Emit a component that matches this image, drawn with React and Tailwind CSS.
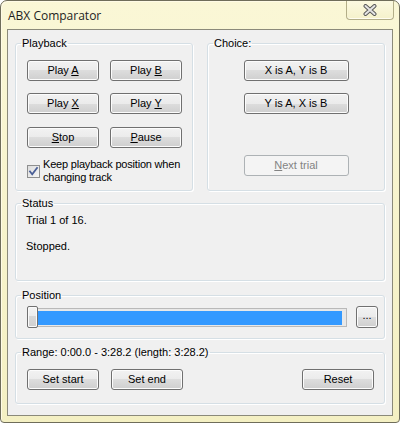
import React from "react";
import clsx from "clsx";

const Btn = ({ children, className, disabled }) => (
  <button
    disabled={disabled}
    className={clsx(
      "h-[21px] rounded-[3px] border text-[11px] leading-[13px] flex items-center justify-center",
      disabled
        ? "border-[#adb2b5] bg-[#f4f4f4] text-[#838383]"
        : "border-[#707070] text-black bg-[linear-gradient(#f2f2f2_0%,#ebebeb_50%,#dddddd_50%,#cfcfcf_100%)] shadow-[inset_0_0_0_1px_#fcfcfc]",
      className
    )}
  >
    <span>{children}</span>
  </button>
);

const Group = ({ label, className, children }) => (
  <fieldset
    className={clsx(
      "rounded-[3px] border border-[#d5dfe5] shadow-[inset_1px_1px_0_#fff,1px_1px_0_#fff] min-w-0",
      className
    )}
  >
    <legend className="ml-[5px] px-[1px] leading-[13px]">{label}</legend>
    {children}
  </fieldset>
);

const Checkbox = () => (
  <span className="w-[13px] h-[13px] shrink-0 border border-[#8e8f8f] bg-[linear-gradient(135deg,#dcdcdc,#f6f6f6)] flex items-center justify-center">
    <svg width="11" height="11" viewBox="0 0 11 11">
      <path
        d="M2 5.5 L4.2 8.2 L9 2"
        fill="none"
        stroke="#4a5f97"
        strokeWidth="1.8"
        strokeLinecap="square"
      />
    </svg>
  </span>
);

const CloseGlyph = () => (
  <svg width="14" height="12" viewBox="0 0 14 12">
    <path
      d="M2.5 2 L11.5 10 M11.5 2 L2.5 10"
      stroke="#5a5a5a"
      strokeWidth="4"
      strokeLinecap="round"
    />
    <path
      d="M2.5 2 L11.5 10 M11.5 2 L2.5 10"
      stroke="#e4e4e4"
      strokeWidth="2"
      strokeLinecap="round"
    />
  </svg>
);

export default function App() {
  return (
    <div className="w-[400px] h-[423px] flex flex-col border border-[#6f6d5a] rounded-t-[7px] rounded-b-[4px] bg-[linear-gradient(180deg,#faf7d6,#f4f0c3)] shadow-[inset_1px_1px_0_#fffbe6] font-['Liberation_Sans',Arial,sans-serif] text-[11px] leading-[13px] text-black overflow-hidden">
      {/* title bar */}
      <div className="h-[28px] flex items-start shrink-0">
        <span className="pl-[7px] pt-[7px] text-[12px] leading-[15px] text-[#1e1e1e] font-['Open_Sans',sans-serif]">
          ABX Comparator
        </span>
        <div className="ml-auto mr-[5px] -mt-[1px] w-[48px] h-[20px] rounded-b-[4px] border border-t-0 border-[#b3ae88] bg-[linear-gradient(180deg,#fcfae2,#f5f1cb)] shadow-[inset_0_-1px_0_#fffdf0] flex items-center justify-center">
          <CloseGlyph />
        </div>
      </div>

      {/* client */}
      <div className="mx-[6px] mb-[6px] flex-1 border border-[#8b8a7a] bg-[#f0f0f0] px-[7px] flex flex-col">
        <div className="mt-[7px] grid grid-cols-2 gap-x-[14px]">
          <Group label="Playback" className="h-[154px]">
            <div className="pl-[11px] mt-[10px] grid grid-cols-[72px_72px] gap-x-[11px]">
              <Btn>
                Play <u>A</u>
              </Btn>
              <Btn>
                Play <u>B</u>
              </Btn>
              <Btn className="mt-[12px]">
                Play <u>X</u>
              </Btn>
              <Btn className="mt-[12px]">
                Play <u>Y</u>
              </Btn>
              <Btn className="mt-[13px]">
                <u>S</u>top
              </Btn>
              <Btn className="mt-[13px]">
                <u>P</u>ause
              </Btn>
            </div>
            <div className="pl-[11px] mt-[10px] flex items-center gap-[3px]">
              <Checkbox />
              <span className="tracking-[-0.2px]">
                Keep playback position when
                <br />
                changing track
              </span>
            </div>
          </Group>

          <Group label="Choice:" className="h-[154px]">
            <div className="mt-[10px] flex flex-col items-center">
              <Btn className="w-[105px]">X is A, Y is B</Btn>
              <Btn className="w-[105px] mt-[12px]">Y is A, X is B</Btn>
              <Btn disabled className="w-[105px] mt-[41px]">
                <u>N</u>ext trial
              </Btn>
            </div>
          </Group>
        </div>

        <Group label="Status" className="mt-[6px] h-[84px]">
          <div className="pl-[10px] mt-[4px]">
            <p>Trial 1 of 16.</p>
            <p className="mt-[13px]">Stopped.</p>
          </div>
        </Group>

        <Group label="Position" className="mt-[8px] h-[50px]">
          <div className="mt-[4px] pl-[11px] pr-[6px] flex items-center">
            <div className="relative flex-1 h-[22px] flex items-center">
              <div className="ml-[1px] flex-1 h-[19px] border border-[#b9b9b9] bg-[#e8e8e8] pl-[9px] pr-[4px] pt-[2px]">
                <div className="h-[14px] bg-[#3399ff]" />
              </div>
              <div className="absolute left-0 top-0 w-[11px] h-[22px] rounded-[2px] border border-[#707070] bg-[linear-gradient(#f4f4f4_0%,#ececec_45%,#d8d8d8_45%,#d0d0d0_100%)] shadow-[inset_0_0_0_1px_#fafafa]" />
            </div>
            <Btn className="ml-[9px] w-[22px] h-[22px] text-[#1c1c50] pb-[3px]">...</Btn>
          </div>
        </Group>

        <Group label="Range: 0:00.0 - 3:28.2 (length: 3:28.2)" className="mt-[7px] h-[58px]">
          <div className="mt-[10px] pl-[11px] pr-[10px] flex items-center gap-[12px]">
            <Btn className="w-[72px]">Set start</Btn>
            <Btn className="w-[72px]">Set end</Btn>
            <Btn className="w-[72px] ml-auto">Reset</Btn>
          </div>
        </Group>
      </div>
    </div>
  );
}
